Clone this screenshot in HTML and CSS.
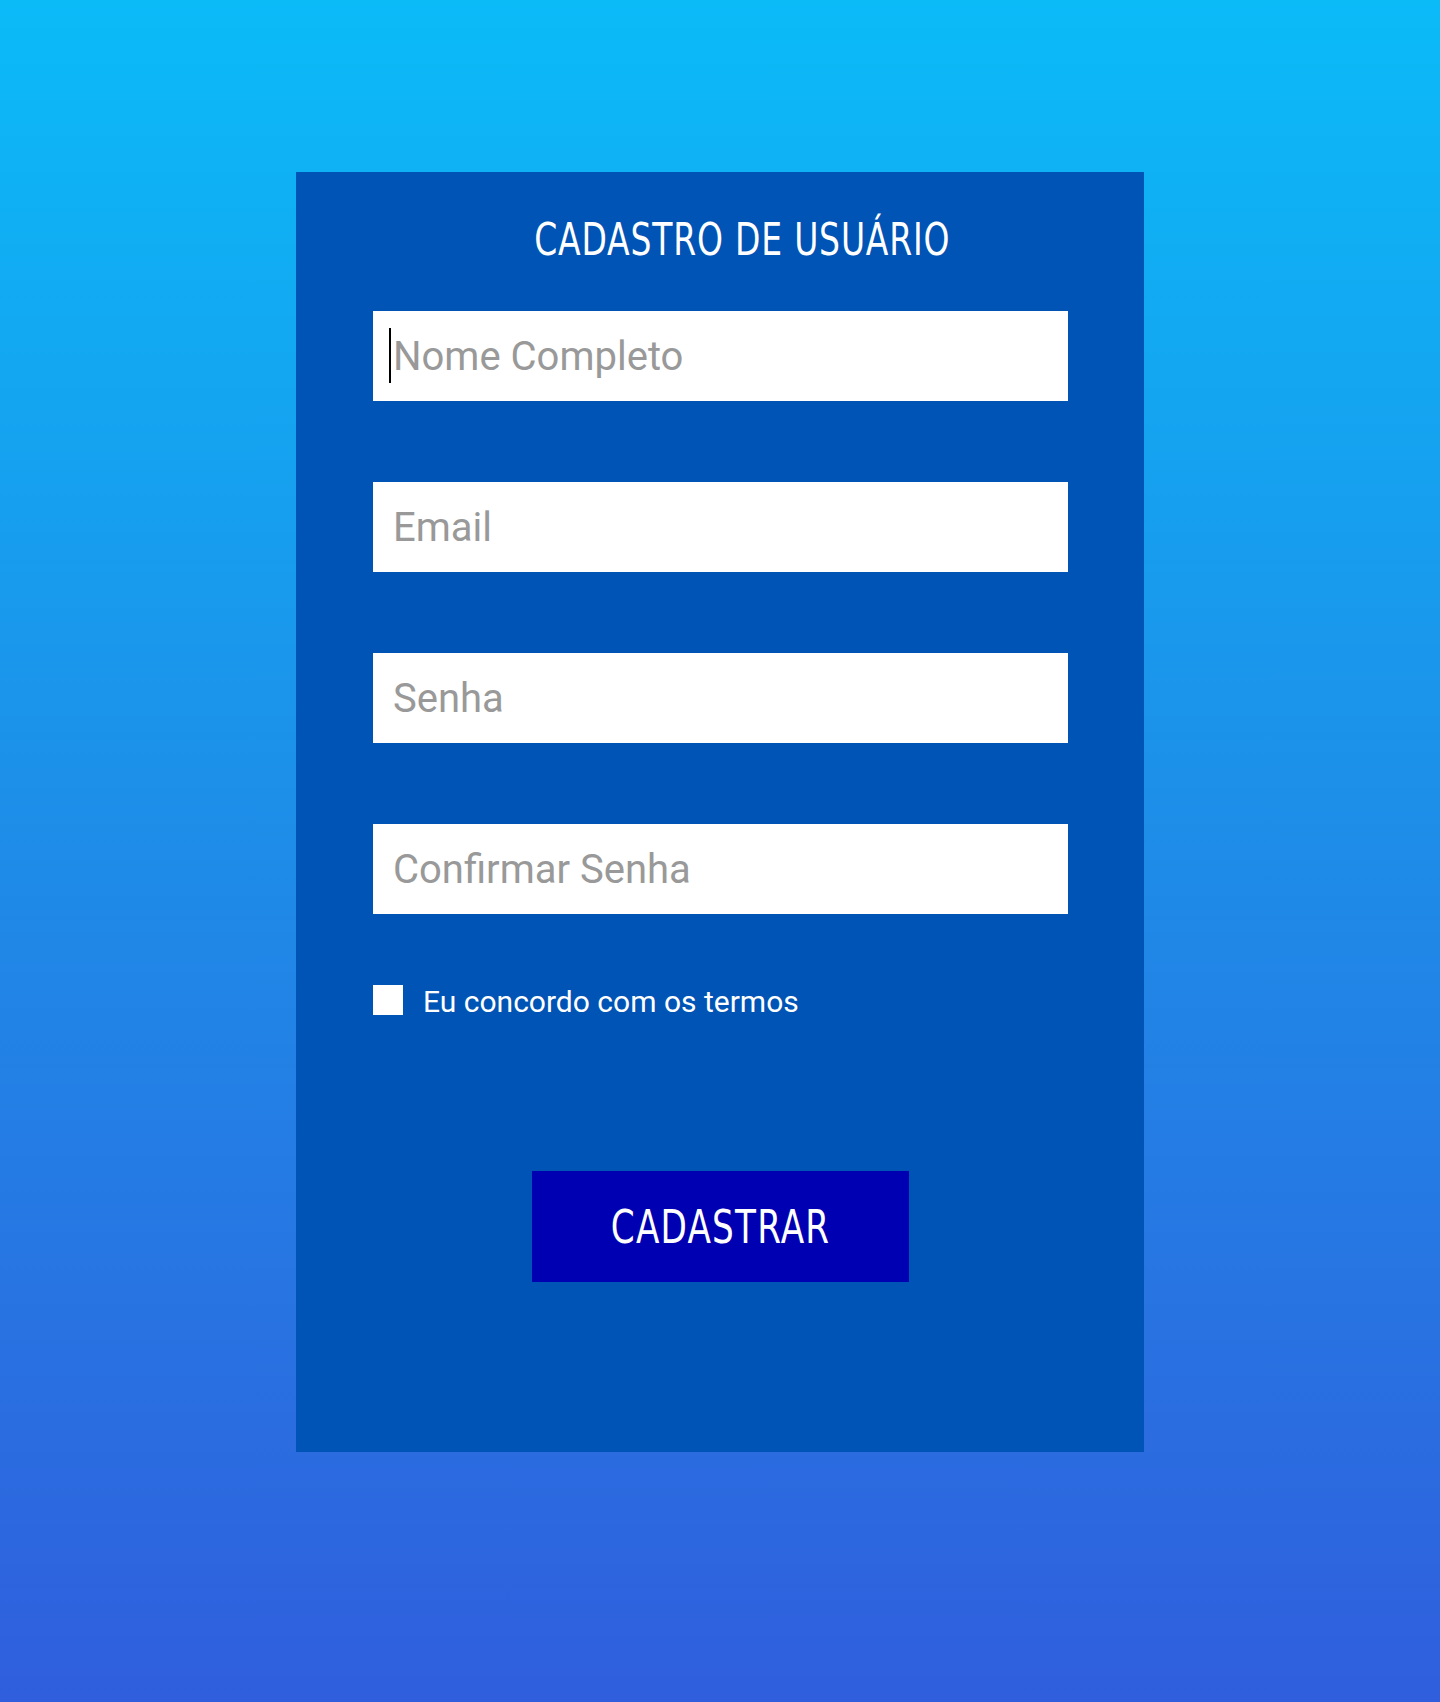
FILE: index.html
```html
<!DOCTYPE html>
<html lang="pt-BR">
<head>
<meta charset="utf-8">
<title>Cadastro de Usuário</title>
<link rel="stylesheet" href="styles.css">
</head>
<body>
<main class="page">
  <form class="card">
    <h1 class="title"><span class="narrow">CADASTRO DE USUÁRIO</span></h1>
    <div class="fields">
      <div class="field-wrap">
        <input class="field" type="text" placeholder="Nome Completo">
        <span class="caret"></span>
      </div>
      <input class="field" type="email" placeholder="Email">
      <input class="field" type="password" placeholder="Senha">
      <input class="field" type="password" placeholder="Confirmar Senha">
    </div>
    <label class="terms">
      <span class="box"></span>
      <span class="terms-text">Eu concordo com os termos</span>
    </label>
    <div class="actions">
      <button class="submit" type="button"><span class="narrow narrow-btn">CADASTRAR</span></button>
    </div>
  </form>
</main>
</body>
</html>
```
FILE: styles.css
```css
html, body {
  margin: 0;
  padding: 0;
}
body {
  width: 1440px;
  height: 1702px;
  background: linear-gradient(180deg, #0bbbf8 0%, #1e8ce8 50%, #305edd 100%);
  font-family: Roboto, "Liberation Sans", sans-serif;
}
.page {
  padding-top: 172px;
  display: flex;
  justify-content: center;
}
.card {
  box-sizing: border-box;
  width: 848px;
  height: 1280px;
  background: #0054b5;
  padding: 0 76px 0 77px;
  display: flex;
  flex-direction: column;
}
.title {
  margin: 0;
  height: 139px;
  box-sizing: border-box;
  padding: 38px 0 0 43px;
  line-height: 60px;
  text-align: center;
  font-family: "DejaVu Sans Condensed", "DejaVu Sans", sans-serif;
  font-weight: 400;
  font-size: 45px;
  color: #ffffff;
}
.narrow {
  display: inline-block;
  letter-spacing: 1px;
  transform: scaleX(0.815);
  white-space: nowrap;
}
.fields {
  display: flex;
  flex-direction: column;
  gap: 81px;
}
.field-wrap {
  position: relative;
  height: 90px;
}
.caret {
  position: absolute;
  left: 16px;
  top: 17px;
  width: 2px;
  height: 55px;
  background: #000000;
}
.field {
  display: block;
  box-sizing: border-box;
  width: 695px;
  height: 90px;
  border: 0;
  outline: none;
  margin: 0;
  padding: 0 20px;
  background: #ffffff;
  font-family: Roboto, sans-serif;
  font-size: 40px;
  color: #222;
}
.field::placeholder {
  color: #999999;
}
.terms {
  margin-top: 71px;
  display: flex;
  align-items: center;
  gap: 20px;
  height: 30px;
}
.box {
  width: 30px;
  height: 30px;
  background: #ffffff;
  flex: none;
}
.terms-text {
  font-size: 30px;
  color: #ffffff;
  line-height: 30px;
  padding-top: 4px;
}
.actions {
  margin-top: 156px;
  display: flex;
  justify-content: center;
}
.submit {
  width: 377px;
  height: 111px;
  border: 0;
  margin: 0;
  padding: 0;
  background: #0000b3;
  color: #ffffff;
  font-family: "DejaVu Sans Condensed", "DejaVu Sans", sans-serif;
  font-size: 47px;
}
.narrow-btn {
  letter-spacing: 1.5px;
  transform: scaleX(0.81);
}
```
